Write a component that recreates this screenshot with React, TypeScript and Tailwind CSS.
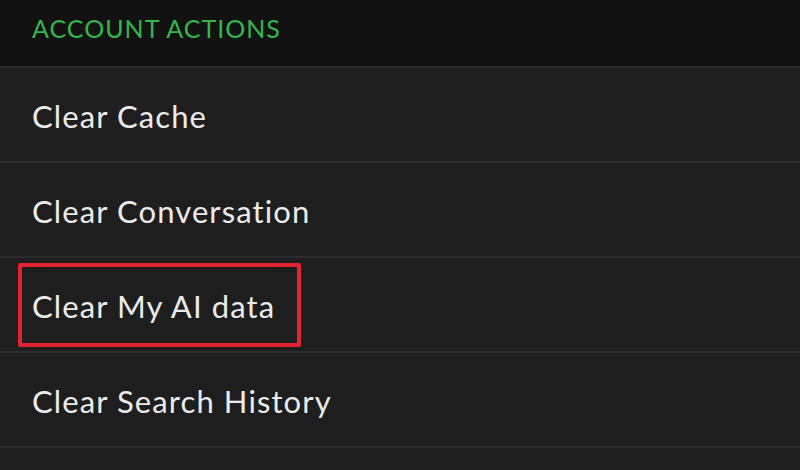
const actions = [
  { label: "Clear Cache" },
  { label: "Clear Conversation" },
  { label: "Clear My AI data", highlighted: true },
  { label: "Clear Search History" },
];

export default function App() {
  return (
    <div
      className="flex h-[470px] w-[800px] flex-col overflow-hidden bg-[#1e1e1e] [font-variant-ligatures:none]"
      style={{ fontFamily: "Lato, 'Open Sans', sans-serif" }}
    >
      {/* Section header */}
      <div className="flex h-[66px] shrink-0 items-center bg-[#121212] px-8 pb-[9px]">
        <span className="text-[25px] leading-none tracking-[1px] text-[#34b64c]">
          ACCOUNT ACTIONS
        </span>
      </div>

      {actions.map((item) => (
        <div
          key={item.label}
          className="flex h-[95px] shrink-0 items-center border-t-2 border-[#2c2c2c] pl-[18px] pt-[3px]"
        >
          <div
            className={
              item.highlighted
                ? "-mt-[3px] flex h-[84px] w-[283px] items-center rounded-[2px] border-4 border-[#e3232f] pl-[10px] pt-[3px]"
                : "flex h-[84px] items-center border-4 border-transparent pl-[10px]"
            }
          >
            <span className="text-[31px] leading-none tracking-[1.1px] text-[#ebebeb]">
              {item.label}
            </span>
          </div>
        </div>
      ))}

      <div className="flex-1 border-t-2 border-[#2c2c2c]" />
    </div>
  );
}
